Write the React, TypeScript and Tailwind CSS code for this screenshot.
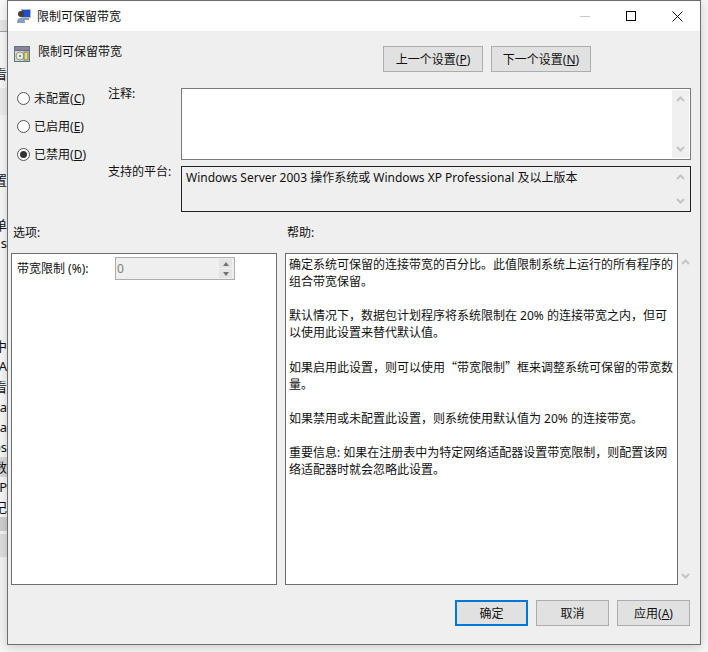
const font = "font-['Noto_Sans','Noto_Sans_CJK_SC',sans-serif]";

const stripRows = [
  { h: "h-[20px]", bg: "bg-[#fafafa]", text: "" },
  { h: "h-[11px]", bg: "bg-[#e6e6e6]", text: "" },
  { h: "h-[1px]", bg: "bg-[#a0a0a0]", text: "" },
  { h: "h-[33px]", bg: "bg-[#f7f7f7]", text: "" },
  { h: "h-[19px]", bg: "bg-[#f7f7f7]", text: "看" },
  { h: "h-[4px]", bg: "bg-[#f7f7f7]", text: "" },
  { h: "h-[27px]", bg: "bg-[#ececec]", text: "" },
  { h: "h-[56px]", bg: "bg-[#f7f7f7]", text: "" },
  { h: "h-[18px]", bg: "bg-[#f7f7f7]", text: "置" },
  { h: "h-[27px]", bg: "bg-[#f7f7f7]", text: "" },
  { h: "h-[18px]", bg: "bg-[#f7f7f7]", text: "单" },
  { h: "h-[18px]", bg: "bg-[#f7f7f7]", text: "s" },
  { h: "h-[84px]", bg: "bg-[#f7f7f7]", text: "" },
  { h: "h-[20px]", bg: "bg-[#f7f7f7]", text: "中" },
  { h: "h-[21px]", bg: "bg-[#f7f7f7]", text: "tA" },
  { h: "h-[20px]", bg: "bg-[#f7f7f7]", text: "看" },
  { h: "h-[20px]", bg: "bg-[#f7f7f7]", text: "a" },
  { h: "h-[20px]", bg: "bg-[#f7f7f7]", text: "a" },
  { h: "h-[20px]", bg: "bg-[#f7f7f7]", text: "os" },
  { h: "h-[20px]", bg: "bg-[#d9d9d9]", text: "数" },
  { h: "h-[20px]", bg: "bg-[#f7f7f7]", text: "P" },
  { h: "h-[20px]", bg: "bg-[#f7f7f7]", text: "记" },
  { h: "h-[14px]", bg: "bg-[#cfcfcf]", text: "" },
  { h: "h-[3px]", bg: "bg-[#f2f2f2]", text: "" },
  { h: "h-[23px]", bg: "bg-[#dedede]", text: "" },
  { h: "h-[92px]", bg: "bg-[#f4f4f4]", text: "" },
];

function TitleIcon() {
  return (
    <svg width="16" height="16" viewBox="0 0 16 16">
      <rect x="5" y="1" width="10" height="9" fill="#b9b9b9" />
      <rect x="6" y="2" width="8" height="7" fill="#1c4fd0" />
      <rect x="7" y="10" width="6" height="2" fill="#9a9a9a" />
      <circle cx="5" cy="6" r="3" fill="#4a3a34" />
      <path d="M1 15c0-4 2-5 4-5s4 1 4 5z" fill="#7f9fc0" />
    </svg>
  );
}

function PolicyIcon() {
  return (
    <svg width="16" height="16" viewBox="0 0 16 16">
      <rect x="0" y="0" width="16" height="16" fill="#5f7480" />
      <rect x="1" y="1" width="14" height="3" fill="#8f7fa5" />
      <rect x="1" y="5" width="14" height="10" fill="#d8dcc8" />
      <circle cx="6" cy="10" r="4" fill="#e8e8e8" stroke="#8aa080" strokeWidth="1" />
      <circle cx="6" cy="10" r="1" fill="#5f7480" />
      <rect x="10" y="6" width="4" height="8" fill="#f0d878" stroke="#6f7f60" strokeWidth="1" />
    </svg>
  );
}

function Radio({ label, accel, checked }: { label: string; accel: string; checked?: boolean }) {
  return (
    <div className="flex items-center h-[13px]">
      <span className="w-[13px] h-[13px] rounded-full border border-[#555] bg-white flex items-center justify-center">
        {checked && <span className="w-[7px] h-[7px] rounded-full bg-[#333]" />}
      </span>
      <span className="ml-[4px] whitespace-nowrap">
        {label}(<span className="underline">{accel}</span>)
      </span>
    </div>
  );
}

function Chevron({ up, color = "#c4c4c4" }: { up?: boolean; color?: string }) {
  return (
    <svg width="9" height="6" viewBox="0 0 9 6">
      <path d={up ? "M1 5 L4.5 1.5 L8 5" : "M1 1 L4.5 4.5 L8 1"} fill="none" stroke={color} strokeWidth="2" />
    </svg>
  );
}

function ScrollBar({ track }: { track: string }) {
  return (
    <div className={`w-[17px] h-full flex flex-col items-center justify-between py-[6px] ${track}`}>
      <Chevron up />
      <Chevron />
    </div>
  );
}

function Btn({ children, wide, focus }: { children: React.ReactNode; wide?: boolean; focus?: boolean }) {
  return (
    <button
      className={`h-[26px] flex items-center justify-center bg-[#e1e1e1] ${wide ? "w-[100px]" : "w-[73px]"} ${
        focus ? "border-2 border-[#0078d7]" : "border border-[#adadad]"
      }`}
    >
      {children}
    </button>
  );
}

export default function App() {
  return (
    <div className={`w-[708px] h-[652px] flex overflow-hidden bg-[#f6f6f6] text-[12px] leading-[17px] text-[#111] ${font}`}>
      {/* whatever is behind the dialog */}
      <div className="w-[7px] shrink-0 flex flex-col overflow-hidden">
        {stripRows.map((r, i) => (
          <div key={i} className={`${r.h} ${r.bg} shrink-0 flex items-center justify-end overflow-hidden whitespace-nowrap text-[13px]`}>
            {r.text}
          </div>
        ))}
      </div>

      <div className="w-[694px] h-[645px] shrink-0 flex flex-col border border-[#6e6e6e] bg-[#efefef] shadow-[0_2px_10px_rgba(0,0,0,0.18)]">
        {/* title bar */}
        <div className="h-[30px] bg-white flex items-center shrink-0">
          <div className="ml-[8px]"><TitleIcon /></div>
          <span className="ml-[5px]">限制可保留带宽</span>
          <div className="ml-auto flex items-center">
            <div className="w-[46px] flex justify-center">
              <div className="w-[10px] h-px bg-[#c8c8c8]" />
            </div>
            <div className="w-[46px] flex justify-center">
              <div className="w-[10px] h-[10px] border border-black" />
            </div>
            <div className="w-[46px] flex justify-center">
              <svg width="11" height="11" viewBox="0 0 11 11">
                <path d="M0.5 0.5 L10.5 10.5 M10.5 0.5 L0.5 10.5" stroke="#111" strokeWidth="1" />
              </svg>
            </div>
          </div>
        </div>

        {/* header row */}
        <div className="flex items-start pl-[6px] mt-[12px] h-[30px] shrink-0">
          <div className="mt-[3px]"><PolicyIcon /></div>
          <span className="ml-[8px]">限制可保留带宽</span>
          <div className="ml-[261px] mt-[3px] flex gap-[8px]">
            <Btn wide>上一个设置(<span className="underline">P</span>)</Btn>
            <Btn wide>下一个设置(<span className="underline">N</span>)</Btn>
          </div>
        </div>

        {/* state and comment */}
        <div className="flex mt-[15px] shrink-0">
          <div className="w-[100px] pl-[9px] pt-[4px] flex flex-col shrink-0">
            <div className="mt-[0px]"><Radio label="未配置" accel="C" /></div>
            <div className="mt-[15px]"><Radio label="已启用" accel="E" /></div>
            <div className="mt-[15px]"><Radio label="已禁用" accel="D" checked /></div>
          </div>
          <div className="flex flex-col gap-[6px]">
            <div className="flex">
              <span className="w-[73px] mt-[-3px]">注释:</span>
              <div className="w-[510px] h-[72px] border border-[#7a7a7a] bg-white flex justify-end p-px">
                <ScrollBar track="bg-[#f0f0f0]" />
              </div>
            </div>
            <div className="flex">
              <span className="w-[73px] mt-[-3px]">支持的平台:</span>
              <div className="w-[510px] h-[46px] border border-[#222] bg-[#efefef] flex justify-between p-px">
                <span className="pl-[3px] pt-px">Windows Server 2003 操作系统或 Windows XP Professional 及以上版本</span>
                <ScrollBar track="bg-[#efefef]" />
              </div>
            </div>
          </div>
        </div>

        {/* section labels */}
        <div className="flex mt-[12px] h-[17px] shrink-0">
          <span className="ml-[5px] w-[274px]">选项:</span>
          <span>帮助:</span>
        </div>

        {/* options and help */}
        <div className="flex mt-[12px] ml-[3px] shrink-0">
          <div className="w-[266px] h-[332px] border border-[#6e6e6e] bg-white pl-[5px] pt-[3px] flex items-start">
            <span className="w-[98px] mt-[3px] whitespace-nowrap">带宽限制 (%):</span>
            <div className="w-[120px] h-[23px] border border-[#adadad] bg-[#efefef] flex items-center justify-between pl-[1px] pr-[2px] text-[#808080]">
              <span>0</span>
              <div className="w-[13px] flex flex-col gap-px">
                <div className="h-[9px] bg-[#e4e4e4] flex items-center justify-center">
                  <div className="w-0 h-0 border-x-[3px] border-x-transparent border-b-[4px] border-b-[#707070]" />
                </div>
                <div className="h-[9px] bg-[#e4e4e4] flex items-center justify-center">
                  <div className="w-0 h-0 border-x-[3px] border-x-transparent border-t-[4px] border-t-[#707070]" />
                </div>
              </div>
            </div>
          </div>
          <div className="ml-[8px] w-[393px] h-[332px] border border-[#6e6e6e] bg-white pl-[3px] pt-[2px]">
            <p className="whitespace-nowrap">
              确定系统可保留的连接带宽的百分比。此值限制系统上运行的所有程序的<br />
              组合带宽保留。<br />
              <br />
              默认情况下，数据包计划程序将系统限制在 20% 的连接带宽之内，但可<br />
              以使用此设置来替代默认值。<br />
              <br />
              如果启用此设置，则可以使用<span className="font-['Noto_Sans_CJK_SC',sans-serif]">“</span>带宽限制<span className="font-['Noto_Sans_CJK_SC',sans-serif]">”</span>框来调整系统可保留的带宽数<br />
              量。<br />
              <br />
              如果禁用或未配置此设置，则系统使用默认值为 20% 的连接带宽。<br />
              <br />
              重要信息: 如果在注册表中为特定网络适配器设置带宽限制，则配置该网<br />
              络适配器时就会忽略此设置。
            </p>
          </div>
          <div className="w-[14px] h-[332px] flex flex-col items-center justify-between py-[6px]">
            <Chevron up />
            <Chevron />
          </div>
        </div>

        {/* dialog buttons */}
        <div className="flex justify-end gap-[8px] mt-[15px] pr-[10px] shrink-0">
          <Btn focus>确定</Btn>
          <Btn>取消</Btn>
          <Btn>应用(<span className="underline">A</span>)</Btn>
        </div>
      </div>
    </div>
  );
}
